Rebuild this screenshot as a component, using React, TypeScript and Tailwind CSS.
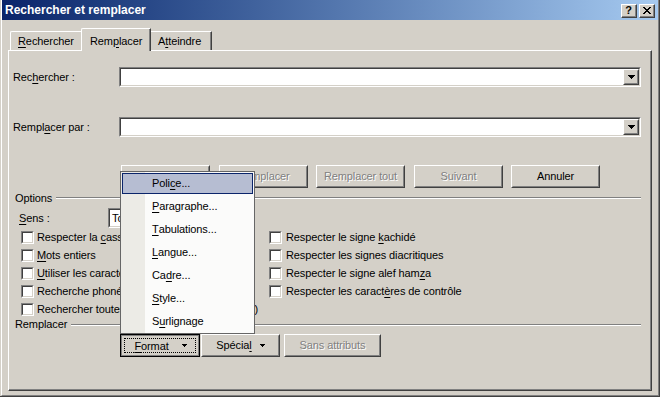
import React from 'react';

// "&x" marks the access key (underlined letter)
const A = ({ t }: { t: string }) => {
  const i = t.indexOf('&');
  if (i < 0) return <>{t}</>;
  return (
    <>
      {t.slice(0, i)}
      <span className="underline decoration-1 underline-offset-[2px]">{t[i + 1]}</span>
      {t.slice(i + 2)}
    </>
  );
};

const ComboArrow = () => (
  <svg width="7" height="4" viewBox="0 0 7 4" shapeRendering="crispEdges">
    <path d="M0 0h7v1H0zM1 1h5v1H1zM2 2h3v1H2zM3 3h1v1H3z" fill="#000" />
  </svg>
);

const SmallArrow = () => (
  <svg width="5" height="3" viewBox="0 0 5 3" shapeRendering="crispEdges">
    <path d="M0 0h5v1H0zM1 1h3v1H1zM2 2h1v1H2z" fill="#000" />
  </svg>
);

const Raised = ({ className = '', children }: { className?: string; children?: React.ReactNode }) => (
  <div className={`border border-t-white border-l-white border-b-[#404040] border-r-[#404040] bg-[#d4d0c8] ${className}`}>
    <div className="h-full border border-t-[#d4d0c8] border-l-[#d4d0c8] border-b-[#808080] border-r-[#808080] flex items-center justify-center">
      {children}
    </div>
  </div>
);

const Combo = ({ className = '', text }: { className?: string; text?: string }) => (
  <div className={`h-[20px] border border-t-[#808080] border-l-[#808080] border-b-white border-r-white ${className}`}>
    <div className="h-full border border-t-[#404040] border-l-[#404040] border-b-[#d4d0c8] border-r-[#d4d0c8] bg-white flex items-center">
      <span className="flex-1 pl-[2px] whitespace-nowrap overflow-hidden">{text}</span>
      <Raised className="w-[16px] h-[16px]">
        <ComboArrow />
      </Raised>
    </div>
  </div>
);

const Btn = ({ w, disabled, children }: { w: string; disabled?: boolean; children: React.ReactNode }) => (
  <Raised className={`${w} h-[23px]`}>
    <span className={disabled ? 'text-[#808080] [text-shadow:1px_1px_0_#fff] whitespace-nowrap' : 'whitespace-nowrap'}>{children}</span>
  </Raised>
);

const Check = ({ label, gap }: { label: string; gap: string }) => (
  <div className="h-[18px] flex items-center">
    <div className="w-[13px] h-[13px] shrink-0 border border-t-[#808080] border-l-[#808080] border-b-white border-r-white">
      <div className="h-full border border-t-[#404040] border-l-[#404040] border-b-[#d4d0c8] border-r-[#d4d0c8] bg-white" />
    </div>
    <span className={`${gap} whitespace-nowrap`}>
      <A t={label} />
    </span>
  </div>
);

const Caption = ({ children }: { children: React.ReactNode }) => (
  <div className="mt-[4px] w-[16px] h-[14px] border border-t-white border-l-white border-b-[#404040] border-r-[#404040] bg-[#d4d0c8]">
    <div className="h-full border-b border-r border-b-[#808080] border-r-[#808080] flex items-center justify-center">
      {children}
    </div>
  </div>
);

const Group = ({ label, className = '' }: { label: string; className?: string }) => (
  <div className={`flex items-center pl-[2px] ${className}`}>
    <span>{label}</span>
    <div className="flex-1 ml-[4px] border-t border-t-[#808080] border-b border-b-white" />
  </div>
);

const MENU = ['Poli&ce...', '&Paragraphe...', '&Tabulations...', '&Langue...', 'Ca&dre...', '&Style...', 'S&urlignage'];

export default function App() {
  return (
    <div className="relative w-[660px] h-[397px] overflow-hidden bg-[#d4d0c8] border-r border-b border-r-[#404040] border-b-[#404040] font-['Liberation_Sans',Arial,sans-serif] text-[11px] leading-[13px] tracking-[-0.1px] text-black">
      <div className="h-full ml-px border-l border-l-white border-r border-r-[#808080] border-b border-b-[#808080] flex flex-col">
        {/* Title bar */}
        <div className="h-[20px] flex items-start bg-linear-to-r from-[#0a246a] to-[#a6caf0]">
          <span className="flex-1 mt-[4px] ml-[3px] font-bold text-[12px] tracking-normal text-white">Rechercher et remplacer</span>
          <Caption>
            <span className="font-bold text-[11px] leading-[11px]">?</span>
          </Caption>
          <div className="ml-[2px] mr-[3px]">
            <Caption>
              <svg width="8" height="7" viewBox="0 0 8 7" shapeRendering="crispEdges">
                <path
                  d="M0 0h2v1H0zM6 0h2v1H6zM1 1h2v1H1zM5 1h2v1H5zM2 2h4v1H2zM3 3h2v1H3zM2 4h4v1H2zM1 5h2v1H1zM5 5h2v1H5zM0 6h2v1H0zM6 6h2v1H6z"
                  fill="#000"
                />
              </svg>
            </Caption>
          </div>
        </div>

        {/* Tabs */}
        <div className="mt-[8px] ml-[8px] h-[22px] flex items-end">
          <div className="w-[71px] h-[19px] pl-[7px] flex items-center border-t border-l border-t-white border-l-white rounded-tl-[2px]">
            <A t="&Rechercher" />
          </div>
          <div className="relative z-10 -mb-px w-[70px] h-[23px] pl-[8px] pt-[2px] flex items-center bg-[#d4d0c8] border-t border-l border-r border-t-white border-l-white border-r-[#404040] shadow-[inset_-1px_0_#808080] rounded-tl-[2px]">
            <A t="Rem&placer" />
          </div>
          <div className="w-[61px] h-[19px] pl-[7px] flex items-center border-t border-r border-t-white border-r-[#404040] shadow-[inset_-1px_0_#808080]">
            <A t="A&tteindre" />
          </div>
        </div>

        {/* Tab panel */}
        <div className="mx-[6px] h-[341px] border border-t-white border-l-white border-r-[#404040] border-b-[#404040]">
          <div className="h-full pl-[4px] pr-[9px] pt-[16px] flex flex-col border-r border-b border-r-[#808080] border-b-[#808080]">
            <div className="h-[20px] flex items-center">
              <span className="w-[106px]">
                <A t="Rec&hercher :" />
              </span>
              <Combo className="flex-1" />
            </div>
            <div className="mt-[30px] h-[20px] flex items-center">
              <span className="w-[106px]">
                <A t="Rempl&acer par :" />
              </span>
              <Combo className="flex-1" />
            </div>

            <div className="mt-[28px] pl-[108px] flex">
              <Btn w="w-[89px]">
                <A t="&lt;&lt; &Moins" />
              </Btn>
              <div className="ml-[9px]">
                <Btn w="w-[89px]" disabled>
                  Remplacer
                </Btn>
              </div>
              <div className="ml-[8px]">
                <Btn w="w-[89px]" disabled>
                  Remplacer tout
                </Btn>
              </div>
              <div className="ml-[9px]">
                <Btn w="w-[89px]" disabled>
                  Suivant
                </Btn>
              </div>
              <div className="ml-[8px]">
                <Btn w="w-[89px]">Annuler</Btn>
              </div>
            </div>

            <Group label="Options" className="mt-[3px] h-[14px]" />

            <div className="mt-[3px] h-[20px] pl-[6px] flex items-center">
              <span className="w-[89px]">
                <A t="&Sens :" />
              </span>
              <Combo className="w-[140px]" text="Tout" />
            </div>

            <div className="flex">
              <div className="w-[256px] pl-[8px]">
                <Check gap="ml-[3px]" label="Respecter la &casse" />
                <Check gap="ml-[3px]" label="&Mots entiers" />
                <Check gap="ml-[3px]" label="&Utiliser les caractères génériques" />
                <Check gap="ml-[3px]" label="Recherche phonétique (anglais)" />
                <Check gap="ml-[3px]" label="Rechercher toutes les formes du mot (anglais)" />
              </div>
              <div>
                <Check gap="ml-[4px]" label="Respecter le signe &kachidé" />
                <Check gap="ml-[4px]" label="Respecter les signes diacritiques" />
                <Check gap="ml-[4px]" label="Respecter le signe alef ham&za" />
                <Check gap="ml-[4px]" label="Respecter les caract&ères de contrôle" />
              </div>
            </div>

            <Group label="Remplacer" className="h-[13px]" />

            <div className="mt-[3px] pl-[107px] flex">
              <div className="w-[80px] h-[23px] border border-black bg-[#d4d0c8]">
                <div className="h-full border border-[#808080] flex items-center justify-center pt-px pl-px outline-1 outline-dotted outline-black -outline-offset-4">
                  <span>
                    <A t="&Format" />
                  </span>
                  <span className="ml-[13px] mb-px">
                    <SmallArrow />
                  </span>
                </div>
              </div>
              <div className="ml-px">
                <Raised className="w-[79px] h-[23px]">
                  <span>
                    <A t="Spécia&l" />
                  </span>
                  <span className="ml-[8px] mb-px">
                    <SmallArrow />
                  </span>
                </Raised>
              </div>
              <div className="ml-[4px]">
                <Btn w="w-[97px]" disabled>
                  Sans attributs
                </Btn>
              </div>
            </div>
          </div>
        </div>
      </div>

      {/* Open Format menu */}
      <div className="absolute left-[120px] top-[171px] w-[135px] h-[163px] border border-[#666666] bg-[linear-gradient(to_right,#ecebe6_24px,#fbfbfa_24px)]">
        {MENU.map((m, i) => (
          <div key={m} className="h-[23px] p-px">
            <div
              className={
                i === 0
                  ? 'h-full flex items-center pl-[29px] border border-[#0a246a] bg-[#b6bdd2]'
                  : 'h-full flex items-center pl-[30px]'
              }
            >
              <A t={m} />
            </div>
          </div>
        ))}
      </div>
    </div>
  );
}
